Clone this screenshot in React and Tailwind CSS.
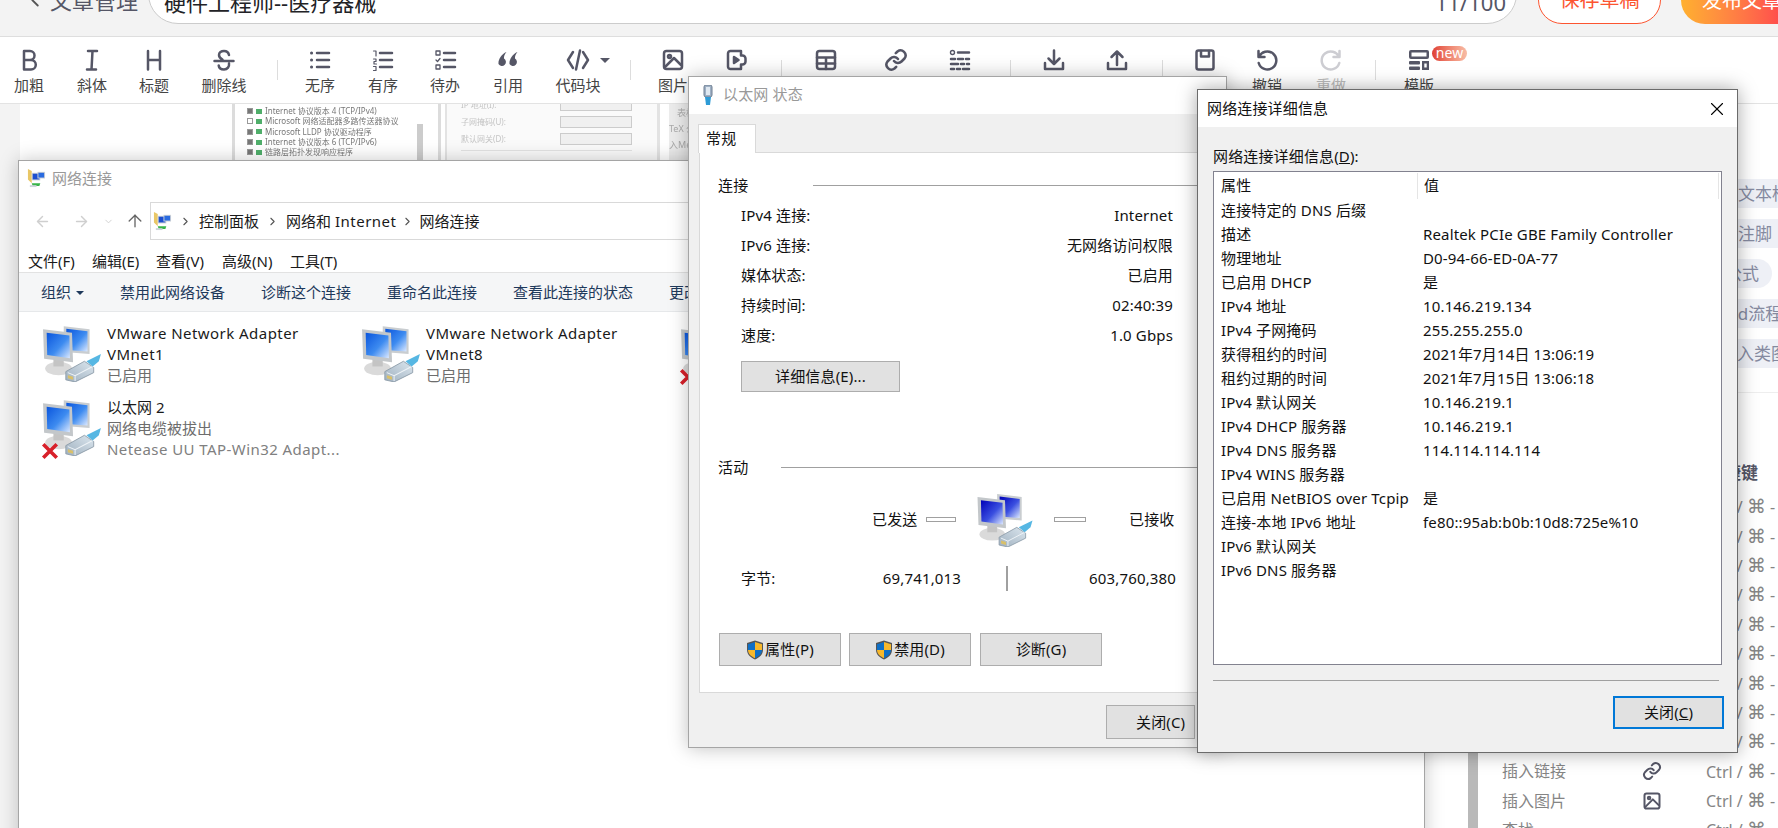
import React, { useId } from "react";
import { ArrowLeft, ArrowRight, ArrowUp, ChevronDown, ChevronRight, ChevronLeft, X } from "lucide-react";

const FONT = "font-['Noto_Sans','Noto_Sans_CJK_SC',sans-serif]";

function Ic({ children }) {
  return (
    <svg viewBox="0 0 24 24" className="w-6 h-6" fill="none" stroke="currentColor" strokeWidth="2.500" strokeLinecap="round" strokeLinejoin="round">
      {children}
    </svg>
  );
}

const icons = {
  b: <path d="M7 3h6a4.500 4.500 0 0 1 0 9H7zM7 12h7a4.800 4.800 0 0 1 0 9.600H7z" />,
  i: <path d="M8 3h9M7 21.500h9M12.500 3l-1 18.500" />,
  h: <path d="M6 3v18.500M18 3v18.500M6 12h12" />,
  s: <path d="M17 7c-.5-2.500-2.500-4-5-4-2.800 0-5 1.500-5 4 0 2 1.500 3.500 3.500 4.500M2.500 13h19M17 15.500c.5 3-1.500 6-5 6-3 0-5-1.500-5.300-4" />,
  ul: <><path d="M9 5h12M9 12h12M9 19h12" /><path d="M3.500 5h.1M3.500 12h.1M3.500 19h.1" strokeWidth="3" /></>,
  ol: <><path d="M9 5h12M9 12h12M9 19h12" /><path d="M2.500 3H5v5M2.500 11H5v2.500H3v2.500h2.500M2.500 18.500H5v4H2.500" strokeWidth="1.200" /></>,
  todo: <><path d="M11 5h11M11 12h11M11 19h11" /><path d="M3 3h4v4H3zM3 17h4v4H3zM3 12l1.500 1.500L7 10.500" strokeWidth="1.300" /></>,
  quote: <g fill="currentColor" stroke="none"><path d="M10.500 4c-2 2-2.700 4.500-2.500 6.500a4 4 0 1 1-5.500 5.500C2.100 11.500 5.500 6 10.500 4zM21.500 4c-2 2-2.700 4.500-2.500 6.500a4 4 0 1 1-5.500 5.500C13.100 11.500 16.500 6 21.500 4z" /></g>,
  code: <path d="M7 4 2 12l5 8M17 4l5 8-5 8M14 2.500 10 21.500" />,
  img: <><rect x="3" y="3" width="18" height="18" rx="2.500" /><circle cx="8.500" cy="8.500" r="1.500" /><path d="m4 19 9-9 7 7" /></>,
  vid: <><path d="M5.500 3H16v4.500h1.500a3 3 0 0 1 3 3v3a3 3 0 0 1-3 3H16V21H5.500A2.500 2.500 0 0 1 3 18.500v-13A2.500 2.500 0 0 1 5.500 3z" /><path d="m9 9 4.500 3L9 15z" fill="currentColor" /></>,
  table: <><rect x="3" y="3" width="18" height="18" rx="2.500" /><path d="M3 9.500h18M3 15.500h18M12 9.500V21" /></>,
  link: <path d="M10 13a5 5 0 0 0 7.500.5l3-3a5 5 0 0 0-7-7l-1.700 1.700M14 11a5 5 0 0 0-7.500-.5l-3 3a5 5 0 0 0 7 7l1.700-1.700" />,
  toc: <><circle cx="4.500" cy="4.500" r="2" strokeWidth="1.400" /><path d="M10 4.500h11M3 11h4M10 11h5M18 11h3M3 16h7M13 16h3M19 16h2M3 21h3M9 21h3M15 21h6" /></>,
  dl: <path d="M12 2.500v13M6.500 10.500 12 16l5.500-5.500M3 15v6h18v-6" />,
  ul2: <path d="M12 17V3.500M6.500 9 12 3.500 17.500 9M3 15v6h18v-6" />,
  save: <><rect x="3.500" y="2.500" width="17" height="19" rx="2" /><path d="M8 3v5.500h8V3" /></>,
  undo: <path d="M3.500 3v6h6M4 9a9 9 0 1 1-.3 6" />,
  redo: <path d="M20.500 3v6h-6M20 9a9 9 0 1 0 .3 6" />,
  tpl: <g fill="currentColor" stroke="none"><path fillRule="evenodd" d="M4 2h16a2 2 0 0 1 2 2v5a2 2 0 0 1-2 2H4a2 2 0 0 1-2-2V4a2 2 0 0 1 2-2zm.5 2.500v4h15v-4z" /><rect x="2" y="13" width="11" height="3.500" rx="1" /><rect x="2" y="18.500" width="11" height="3.500" rx="1" /><path fillRule="evenodd" d="M15 13h7v9h-7zM17.300 15.500v4h2.400v-4z" /></g>,
};

const tools = [
  { w: "w-[58px]", k: "b", t: "加粗" },
  { w: "w-[68px]", k: "i", t: "斜体" },
  { w: "w-[56px]", k: "h", t: "标题" },
  { w: "w-[84px]", k: "s", t: "删除线" },
  { w: "w-[22px]", d: 1 },
  { w: "w-[64px]", k: "ul", t: "无序" },
  { w: "w-[62px]", k: "ol", t: "有序" },
  { w: "w-[62px]", k: "todo", t: "待办" },
  { w: "w-[64px]", k: "quote", t: "引用" },
  { w: "w-[76px]", k: "code", t: "代码块", caret: 1 },
  { w: "w-[28px]", d: 1 },
  { w: "w-[58px]", k: "img", t: "图片" },
  { w: "w-[70px]", k: "vid", t: "视频" },
  { w: "w-[18px]", d: 1 },
  { w: "w-[72px]", k: "table", t: "表格" },
  { w: "w-[68px]", k: "link", t: "链接" },
  { w: "w-[60px]", k: "toc", t: "目录" },
  { w: "w-[40px]", d: 1 },
  { w: "w-[48px]", k: "dl", t: "导入" },
  { w: "w-[78px]", k: "ul2", t: "导出" },
  { w: "w-[12px]", d: 1 },
  { w: "w-[74px]", k: "save", t: "保存" },
  { w: "w-[50px]", k: "undo", t: "撤销" },
  { w: "w-[78px]", k: "redo", t: "重做", off: 1 },
  { w: "w-[10px]", d: 1 },
  { w: "w-[78px]", k: "tpl", t: "模版", badge: 1 },
];

function Tool({ tool }) {
  if (tool.d) {
    return (
      <div className={`${tool.w} flex justify-center pt-[23px] shrink-0`}>
        <div className="w-px h-[20px] bg-[#dddddd]" />
      </div>
    );
  }
  return (
    <div className={`${tool.w} shrink-0 flex flex-col items-center pt-[11px] relative ${tool.off ? "text-[#cdcdd2]" : "text-[#555666]"}`}>
      <Ic>{icons[tool.k]}</Ic>
      <div className={`mt-[3px] text-[15px] leading-[20px] whitespace-nowrap ${tool.off ? "text-[#bbbbbb]" : "text-[#444444]"}`}>{tool.t}</div>
      {tool.caret && <div className="absolute left-[60px] top-[21px] w-0 h-0 border-x-[5px] border-x-transparent border-t-[5px] border-t-[#555666]" />}
      {tool.badge && (
        <div className="absolute left-[52px] top-[9px] h-[15px] w-[35px] rounded-full bg-linear-to-r from-[#df3e36] to-[#f7bda6] text-white text-[14px] leading-[14px] text-center">new</div>
      )}
    </div>
  );
}

function NetIcon({ dark, className = "w-[62px] h-[58px]" }) {
  const id = useId();
  return (
    <svg viewBox="0 0 60 56" className={className}>
      <defs>
        <linearGradient id={id + "a"} x1="0" y1="0" x2="1" y2="1">
          <stop offset="0" stopColor={dark ? "#0000b8" : "#0a55dd"} />
          <stop offset="0.55" stopColor={dark ? "#3a4fe0" : "#3d8bf0"} />
          <stop offset="1" stopColor="#dbe8ff" />
        </linearGradient>
        <linearGradient id={id + "b"} x1="0" y1="1" x2="1" y2="0">
          <stop offset="0" stopColor="#9fb0bf" />
          <stop offset="1" stopColor="#dbe6ee" />
        </linearGradient>
      </defs>
      <path d="M22 2 47 5v24l-25-2z" fill="#c9cdd0" />
      <path d="M24.500 4.500 45 7v19.500L24.500 25z" fill={`url(#${id}a)`} />
      <ellipse cx="17" cy="43" rx="13" ry="6.500" fill="#dadada" />
      <path d="M12 34h10v7H12z" fill="#c4c4c4" />
      <path d="M2 5 30 8.500 31 37 3 33.500z" fill="#c3c7ca" />
      <path d="M5.500 8.500 27.500 11l.5 22-22-3z" fill={`url(#${id}a)`} />
      <path d="M24 46 42 36l9 6v5L33 56l-9-2z" fill={`url(#${id}b)`} stroke="#8796a4" strokeWidth="0.800" />
      <path d="m26 47 7 3 17-9M33 50v5" stroke="#eef3f7" strokeWidth="1" fill="none" />
      <path d="M26 49.500 31 51v3l-5-1.500z" fill="#d9c06a" />
      <path d="m44 36 14-7-2 7-6 5z" fill="#56b7e3" />
    </svg>
  );
}

function Shield() {
  return (
    <svg viewBox="0 0 18 20" className="w-[18px] h-[20px] shrink-0">
      <path d="M9 .5 17 3v7c0 4.500-3.500 7.500-8 9.500C4.500 17.500 1 14.500 1 10V3z" fill="#555" />
      <path d="M9 2 2 4.200V10h7z" fill="#0f6fc6" />
      <path d="M9 2v8h7V4.200z" fill="#f7b82b" />
      <path d="M2 10c0 3.600 2.800 6.200 7 8.200V10z" fill="#f7b82b" />
      <path d="M9 10v8.200c4.200-2 7-4.600 7-8.200z" fill="#0f6fc6" />
    </svg>
  );
}

function FolderNet() {
  return (
    <svg viewBox="0 0 20 20" className="w-[19px] h-[19px] shrink-0">
      <path d="M1 0 5 2v13L1 11z" fill="#e9c766" />
      <path d="M5 4h9v8H5z" fill="#c9cfd6" />
      <path d="M6 5h7v6H6z" fill="#1d4fd0" />
      <path d="M11 3h8v7h-8z" fill="#c9cfd6" />
      <path d="M12 4h6v5h-6z" fill="#2a6be0" />
      <path d="M5 15h9l-1 3H6z" fill="#39b54a" />
      <path d="M3 17h7v2H3z" fill="#cdd5da" />
    </svg>
  );
}

function Row({ l, v }) {
  return (
    <div className="h-[30px] flex items-center justify-between pl-[41px] pr-[42px]">
      <span>{l}</span>
      <span>{v}</span>
    </div>
  );
}

function Bars({ w }) {
  return <div className={`${w} h-[3px] bg-white border border-[#a0a0a0] box-content shrink-0`} />;
}

function WinBtn({ className, children }) {
  return (
    <div className={`h-[33px] bg-[#e1e1e1] border border-[#adadad] flex items-center justify-center text-[15px] text-[#111] ${className}`}>
      {children}
    </div>
  );
}

const details = [
  ["连接特定的 DNS 后缀", ""],
  ["描述", "Realtek PCIe GBE Family Controller"],
  ["物理地址", "D0-94-66-ED-0A-77"],
  ["已启用 DHCP", "是"],
  ["IPv4 地址", "10.146.219.134"],
  ["IPv4 子网掩码", "255.255.255.0"],
  ["获得租约的时间", "2021年7月14日 13:06:19"],
  ["租约过期的时间", "2021年7月15日 13:06:18"],
  ["IPv4 默认网关", "10.146.219.1"],
  ["IPv4 DHCP 服务器", "10.146.219.1"],
  ["IPv4 DNS 服务器", "114.114.114.114"],
  ["IPv4 WINS 服务器", ""],
  ["已启用 NetBIOS over Tcpip", "是"],
  ["连接-本地 IPv6 地址", "fe80::95ab:b0b:10d8:725e%10"],
  ["IPv6 默认网关", ""],
  ["IPv6 DNS 服务器", ""],
];

const adapters = [
  { a: ["VMware Network Adapter", "VMnet1"], s: "已启用" },
  { a: ["VMware Network Adapter", "VMnet8"], s: "已启用" },
  { a: ["以太网", "Realtek PCIe GBE Family"], s: "已启用", x: 1 },
  { a: ["以太网 2"], s: "网络电缆被拔出", extra: "Netease UU TAP-Win32 Adapt...", x: 1 },
];

const blurList = [
  [1, "Internet 协议版本 4 (TCP/IPv4)"],
  [0, "Microsoft 网络适配器多路传送器协议"],
  [1, "Microsoft LLDP 协议驱动程序"],
  [1, "Internet 协议版本 6 (TCP/IPv6)"],
  [1, "链路层拓扑发现响应程序"],
];

const shortcuts = ["加粗", "斜体", "标题", "无序列表", "有序列表", "待办列表", "插入代码", "插入公式", "插入表格"];

function Chip({ ml, children }) {
  return (
    <div className={`${ml} h-[29px] w-[300px] rounded-l-[15px] bg-[#eef0f6] text-[#858aa0] text-[17px] leading-[29px] pl-[13px] whitespace-nowrap shrink-0`}>
      {children}
    </div>
  );
}

function Shortcut({ label, icon }) {
  return (
    <div className="h-[29.4px] flex items-center text-[16px] leading-[24px] text-[#858585] whitespace-nowrap shrink-0">
      <span className="w-[140px]">{label}</span>
      <span className="w-[64px] text-[#555666] flex items-center">
        {icon && (
          <svg viewBox="0 0 24 24" className="w-[20px] h-[20px]" fill="none" stroke="currentColor" strokeWidth="2.400" strokeLinecap="round" strokeLinejoin="round">
            {icon}
          </svg>
        )}
      </span>
      <span>Ctrl / <span className="font-['DejaVu_Sans',sans-serif] text-[19px] leading-[24px]">⌘</span> -</span>
    </div>
  );
}

const latin = /^[\x00-\x7f]+$/;

export default function App() {
  return (
    <div className={`relative w-[1778px] h-[828px] overflow-hidden bg-white ${FONT}`}>
      {/* page header */}
      <div className="h-[37px] bg-[#f3f3f3] border-b border-[#dedede] flex items-end pb-[12px] overflow-hidden">
        <div className="w-[50px] shrink-0 pl-[24px] pb-[11px]">
          <ChevronLeft className="w-[22px] h-[26px] text-[#555]" strokeWidth={2} />
        </div>
        <span className="w-[88px] shrink-0 pb-[9px] text-[22px] leading-[30px] text-[#555666] whitespace-nowrap">文章管理</span>
        <div className="ml-[10px] w-[1369px] h-[60px] shrink-0 bg-white border border-[#cccccc] rounded-[30px] flex items-end justify-between pl-[15px] pr-[10px] pb-[6px] text-[22px] leading-[30px]">
          <span className="text-[#222226] whitespace-nowrap">硬件工程师--医疗器械</span>
          <span className="text-[#555666]">11/100</span>
        </div>
        <div className="ml-[21px] w-[123px] h-[60px] shrink-0 rounded-[24px] bg-white border border-[#fc5531] text-[#fc5531] pb-[8px] text-[20px] leading-[30px] flex items-end justify-center">保存草稿</div>
        <div className="ml-[20px] w-[123px] h-[60px] shrink-0 rounded-l-[24px] bg-linear-to-r from-[#ffb02e] to-[#fc1e4f] text-white text-[20px] leading-[30px] pb-[8px] flex items-end pl-[21px] whitespace-nowrap">发布文章</div>
      </div>

      {/* editor toolbar */}
      <div className="h-[67px] bg-white border-b border-[#e3e3e3] flex">
        {tools.map((t, i) => (
          <Tool key={i} tool={t} />
        ))}
      </div>

      {/* page behind the windows */}
      <div className="h-[724px] bg-[#f3f3f3] pl-[20px] flex overflow-hidden">
        <div className="flex-1 bg-white flex pl-[212px] items-start">
          <div className="w-[209px] h-[57px] shrink-0 border-l-[3px] border-r-[3px] border-[#dcdcdc] relative overflow-hidden blur-[0.6px]">
            <div className="pl-[12px] pt-[2px]">
              {blurList.map(([c, t]) => (
                <div key={t} className="h-[10.300px] flex items-center gap-[3px] text-[8px] leading-[10px] text-[#777] whitespace-nowrap">
                  <span className={`w-[6px] h-[6px] border border-[#999] shrink-0 ${c ? "bg-[#777]" : "bg-white"}`} />
                  <span className="w-[6px] h-[5px] bg-[#4fae6a] shrink-0" />
                  <span>{t}</span>
                </div>
              ))}
            </div>
            <div className="absolute right-[15px] top-[20px] w-[6px] h-[37px] bg-[#cccccc]" />
          </div>
          <div className="ml-[4px] w-[215px] h-[57px] shrink-0 bg-[#fafafa] border-l-2 border-r-[3px] border-[#e3e3e3] flex flex-col pl-[14px] pr-[25px] text-[8px] text-[#c4c4c4] blur-[0.6px] relative overflow-hidden">
            {["IP 地址(I):", "子网掩码(U):", "默认网关(D):"].map((t, i) => (
              <div key={t} className={`flex items-center justify-between h-[14px] ${i === 0 ? "-mt-[6px]" : "mt-[3px]"}`}>
                <span>{t}</span>
                <span className="w-[72px] h-[12px] border border-[#cccccc] bg-[#f0f0f0]" />
              </div>
            ))}
            <div className="mt-[4px] border-t border-[#e3e3e3] w-full" />
          </div>
          <div className="ml-[9px] w-[20px] h-[57px] shrink-0 bg-[#ececec] text-[9px] text-[#aaa] leading-[16px] pt-[1px] overflow-hidden whitespace-nowrap blur-[0.6px]">
            <div className="pl-[8px]">表格</div>
            <div>TeX 公式</div>
            <div>入Mer</div>
          </div>
          <div className="ml-[779px] w-[10px] h-[724px] shrink-0 bg-[#b9b9b9]" />
          <div className="flex-1 min-w-0 flex flex-col">
            <div className="h-[75px] shrink-0" />
            <div className="flex flex-col gap-[11px] shrink-0">
              <Chip ml="ml-[247px]">文本框</Chip>
              <Chip ml="ml-[247px]">注脚</Chip>
              <div className="ml-[234px] w-[60px] h-[29px] rounded-[15px] bg-[#eef0f6] text-[#858aa0] text-[17px] leading-[29px] pl-[13px] whitespace-nowrap">公式</div>
              <Chip ml="ml-[185px]">Mermaid流程图</Chip>
              <Chip ml="ml-[229px]">插入类图</Chip>
            </div>
            <div className="mt-[24px] border-t border-[#eeeeee] shrink-0" />
            <div className="mt-[79px] pl-[24px] flex flex-col shrink-0">
              <div className="h-[24px] pl-[205px] -mt-[12px] mb-[8px] text-[17px] font-bold text-[#555666] whitespace-nowrap shrink-0">快捷键</div>
              {shortcuts.map((s) => (
                <Shortcut key={s} label={s} />
              ))}
              <Shortcut label="插入链接" icon={icons.link} />
              <Shortcut label="插入图片" icon={icons.img} />
              <Shortcut label="查找" />
            </div>
          </div>
        </div>
      </div>

      {/* Network Connections explorer window */}
      <div className="absolute left-[18px] top-[160px] w-[1407px] h-[700px] bg-white border border-[#a5a5a5] shadow-[0_0_18px_rgba(0,0,0,0.22)] text-[15px]">
        <div className="h-[41px] flex items-center pl-[8px] pb-[6px] gap-[6px]">
          <FolderNet />
          <span className="text-[#999999]">网络连接</span>
        </div>
        <div className="h-[38px] flex items-center">
          <ArrowLeft className="ml-[15px] w-[17px] h-[17px] text-[#cfcfcf]" />
          <ArrowRight className="ml-[22px] w-[17px] h-[17px] text-[#cfcfcf]" />
          <ChevronDown className="ml-[13px] w-[11px] h-[11px] text-[#cfcfcf]" />
          <ArrowUp className="ml-[11px] w-[20px] h-[20px] text-[#666]" strokeWidth={1.600} />
          <div className="ml-[5px] flex-1 h-[38px] border border-[#d9d9d9] border-r-0 flex items-center pl-[2px] text-[#1a1a1a]">
            <FolderNet />
            <ChevronRight className="ml-[7px] w-[13px] h-[13px] text-[#555]" />
            <span className="ml-[7px]">控制面板</span>
            <ChevronRight className="ml-[7px] w-[13px] h-[13px] text-[#555]" />
            <span className="ml-[7px]">网络和 <span className="tracking-[0.5px]">Internet</span></span>
            <ChevronRight className="ml-[4px] w-[13px] h-[13px] text-[#555]" />
            <span className="ml-[6px]">网络连接</span>
          </div>
        </div>
        <div className="h-[33px] pt-[11px] flex items-center border-b border-[#e2e2e2] text-[#1a1a1a]">
          <span className="ml-[9px] w-[64px]">文件(F)</span>
          <span className="w-[64px]">编辑(E)</span>
          <span className="w-[66px]">查看(V)</span>
          <span className="w-[68px]">高级(N)</span>
          <span>工具(T)</span>
        </div>
        <div className="h-[39px] pt-[1px] bg-[#f5f6f7] border-b border-[#e6e8ea] flex items-center text-[#1e395b] text-[15px] whitespace-nowrap">
          <span className="ml-[22px] w-[79px] flex items-center gap-[5px]">
            组织
            <span className="w-0 h-0 border-x-[4px] border-x-transparent border-t-[4px] border-t-[#1e395b]" />
          </span>
          <span className="w-[141px]">禁用此网络设备</span>
          <span className="w-[126px]">诊断这个连接</span>
          <span className="w-[126px]">重命名此连接</span>
          <span className="w-[156px]">查看此连接的状态</span>
          <span>更改此连接的设置</span>
        </div>
        <div className="pt-[11px] pl-[22px] grid grid-cols-[319px_319px_319px] auto-rows-[74px]">
          {adapters.map((ad) => (
            <div key={ad.a[0] + ad.s + ad.a[1]} className="flex relative">
              <div className="w-[66px] pt-[1px] shrink-0">
                <NetIcon />
              </div>
              {ad.x && (
                <svg viewBox="0 0 16 16" className="absolute left-[0px] top-[45px] w-[18px] h-[18px]">
                  <path d="M2 2l12 12M14 2 2 14" stroke="#d8202a" strokeWidth="3.200" />
                </svg>
              )}
              <div className="text-[15px] leading-[21px] text-[#1a1a1a] whitespace-nowrap">
                {ad.a.map((t) => (
                  <div key={t} className={latin.test(t) ? "tracking-[0.45px]" : ""}>{t}</div>
                ))}
                <div className="text-[#6d6d6d]">{ad.s}</div>
                {ad.extra && <div className="text-[#808080] tracking-[0.43px]">{ad.extra}</div>}
              </div>
            </div>
          ))}
        </div>
      </div>

      {/* Ethernet status window */}
      <div className="absolute left-[688px] top-[76px] w-[539px] h-[672px] bg-[#f0f0f0] border border-[#a5a5a5] shadow-[0_0_18px_rgba(0,0,0,0.25)] text-[15px] tracking-[0.15px] text-[#111] flex flex-col">
        <div className="h-[37px] bg-white flex items-center pl-[13px] pb-[2px] gap-[9px] shrink-0">
          <svg viewBox="0 0 12 20" className="w-[12px] h-[20px]">
            <rect x="2" y="0" width="8" height="12" rx="2" fill="#9fb0c4" stroke="#6e7f92" />
            <rect x="4" y="2" width="4" height="8" fill="#dfe8f1" />
            <path d="M3 12h6l-1 8H4z" fill="#2e9bd6" />
          </svg>
          <span className="text-[#999999] whitespace-nowrap">以太网 状态</span>
        </div>
        <div className="h-[38px] pt-[10px] pl-[9px] shrink-0">
          <div className="w-[58px] h-[29px] bg-white border border-b-0 border-[#d9d9d9] pl-[7px] leading-[26px] relative z-10">常规</div>
        </div>
        <div className="mx-[10px] h-[541px] bg-white border border-[#d9d9d9] shrink-0">
          <div className="h-[22px] mt-[21px] flex items-center pl-[18px]">
            <span className="w-[95px]">连接</span>
            <div className="flex-1 h-px bg-[#a0a0a0]" />
          </div>
          <div className="mt-[4px]">
            <Row l="IPv4 连接:" v="Internet" />
            <Row l="IPv6 连接:" v="无网络访问权限" />
            <Row l="媒体状态:" v="已启用" />
            <Row l="持续时间:" v="02:40:39" />
            <Row l="速度:" v="1.0 Gbps" />
          </div>
          <WinBtn className="ml-[41px] mt-[11px] w-[159px] !h-[31px]">详细信息(E)...</WinBtn>
          <div className="h-[22px] mt-[64px] flex items-center pl-[18px]">
            <span className="w-[63px]">活动</span>
            <div className="flex-1 h-px bg-[#a0a0a0]" />
          </div>
          <div className="mt-[14px] h-[55px] flex items-center">
            <span className="ml-[172px] w-[45px] whitespace-nowrap">已发送</span>
            <div className="ml-[9px]"><Bars w="w-[28px]" /></div>
            <div className="ml-[19px] w-[62px]"><NetIcon dark className="w-[60px] h-[55px]" /></div>
            <div className="ml-[17px]"><Bars w="w-[30px]" /></div>
            <span className="ml-[43px] whitespace-nowrap">已接收</span>
          </div>
          <div className="mt-[19px] h-[25px] flex items-center">
            <div className="ml-[41px] w-[220px] flex justify-between">
              <span>字节:</span>
              <span>69,741,013</span>
            </div>
            <div className="ml-[45px] w-[2px] h-[25px] bg-[#a0a0a0]" />
            <div className="w-[168px] text-right">603,760,380</div>
          </div>
          <div className="mt-[42px] flex pl-[19px] gap-[8px]">
            <WinBtn className="w-[122px] gap-[1px]"><Shield />属性(P)</WinBtn>
            <WinBtn className="w-[122px] gap-[1px]"><Shield />禁用(D)</WinBtn>
            <WinBtn className="ml-[1px] w-[122px]">诊断(G)</WinBtn>
          </div>
        </div>
        <div className="flex justify-end pr-[31px] mt-[12px]">
          <WinBtn className="w-[89px] !h-[34px] pl-[29px] !justify-start whitespace-nowrap">关闭(C)</WinBtn>
        </div>
      </div>

      {/* Network connection details dialog */}
      <div className="absolute left-[1197px] top-[89px] w-[541px] h-[664px] bg-[#f0f0f0] border border-[#6b6b6b] shadow-[0_0_18px_rgba(0,0,0,0.35)] text-[15px] tracking-[0.15px] text-[#111] flex flex-col">
        <div className="h-[37px] bg-white flex items-center justify-between pl-[9px] pr-[9px] shrink-0">
          <span>网络连接详细信息</span>
          <X className="w-[22px] h-[22px] text-black" strokeWidth={1.200} />
        </div>
        <div className="pl-[15px] pt-[19px] pb-[1px] leading-[20px] shrink-0">网络连接详细信息(<u>D</u>):</div>
        <div className="ml-[15px] mt-[4px] w-[509px] h-[494px] bg-white border border-[#82828f] shrink-0">
          <div className="h-[28px] flex relative">
            <div className="w-[204px] pl-[7px] border-r border-[#e5e5e5] h-[26px] mt-[1px] leading-[24px]">属性</div>
            <div className="pl-[6px] leading-[26px]">值</div>
            <div className="absolute right-[2px] top-[1px] h-[26px] w-px bg-[#e5e5e5]" />
          </div>
          {details.map(([k, v]) => (
            <div key={k} className="h-[24px] grid grid-cols-[202px_1fr] pl-[7px] leading-[20px] whitespace-nowrap">
              <span>{k}</span>
              <span>{v}</span>
            </div>
          ))}
        </div>
        <div className="ml-[15px] mt-[15px] w-[506px] h-px bg-[#a0a0a0] shrink-0" />
        <div className="mt-[15px] pr-[13px] flex justify-end shrink-0">
          <div className="w-[111px] h-[33px] bg-[#e1e1e1] border-2 border-[#0078d7] flex items-center justify-center">
            关闭(<u>C</u>)
          </div>
        </div>
      </div>
    </div>
  );
}
